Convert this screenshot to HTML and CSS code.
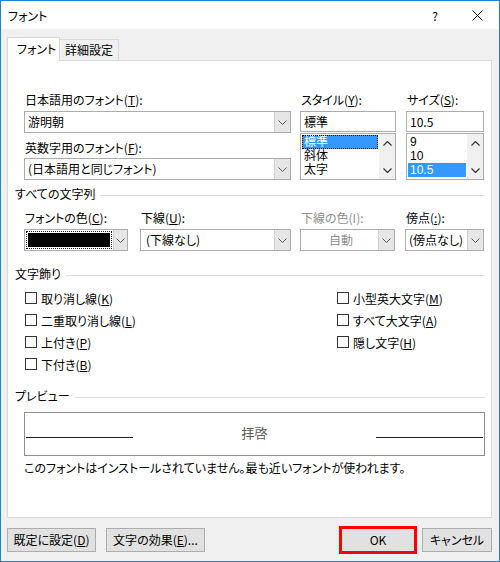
FILE: index.html
```html
<!DOCTYPE html>
<html lang="ja">
<head>
  <meta charset="UTF-8">
  <meta name="viewport" content="width=device-width, initial-scale=1.0">
  <title>フォント</title>
  <link rel="stylesheet" href="styles.css">
</head>
<body>
  <div class="window">
    <div class="titlebar">
      <span class="title">フォント</span>
      <span class="help">?</span>
      <svg class="close" width="11" height="11" viewBox="0 0 11 11"><path d="M0.5 0.5L10.5 10.5M10.5 0.5L0.5 10.5" stroke="#111" stroke-width="1"/></svg>
    </div>

    <div class="client">
      <div class="tabs">
        <div class="tab active">フォント</div>
        <div class="tab other">詳細設定</div>
      </div>

      <div class="panel">
        <div class="font-row">
          <div class="col-face">
            <div class="label">日本語用のフォント(<u>T</u>):</div>
            <div class="combo">
              <span class="combo-text">游明朝</span>
              <span class="combo-btn"><svg width="9" height="5" viewBox="0 0 9 5"><path d="M0.5 0.5L4.5 4.5L8.5 0.5" fill="none" stroke="#5a5a5a"/></svg></span>
            </div>
            <div class="label second">英数字用のフォント(<u>F</u>):</div>
            <div class="combo second">
              <span class="combo-text">(日本語用と同じフォント)</span>
              <span class="combo-btn"><svg width="9" height="5" viewBox="0 0 9 5"><path d="M0.5 0.5L4.5 4.5L8.5 0.5" fill="none" stroke="#5a5a5a"/></svg></span>
            </div>
          </div>

          <div class="col-style">
            <div class="label">スタイル(<u>Y</u>):</div>
            <div class="field">標準</div>
            <div class="listbox">
              <div class="items">
                <div class="item sel focus">標準</div>
                <div class="item">斜体</div>
                <div class="item">太字</div>
              </div>
              <div class="vscroll">
                <svg width="9" height="5" viewBox="0 0 9 5"><path d="M0.5 4.5L4.5 0.5L8.5 4.5" fill="none" stroke="#333" stroke-width="1.2"/></svg>
                <svg width="9" height="5" viewBox="0 0 9 5"><path d="M0.5 0.5L4.5 4.5L8.5 0.5" fill="none" stroke="#333" stroke-width="1.2"/></svg>
              </div>
            </div>
          </div>

          <div class="col-size">
            <div class="label">サイズ(<u>S</u>):</div>
            <div class="field">10.5</div>
            <div class="listbox">
              <div class="items">
                <div class="item">9</div>
                <div class="item">10</div>
                <div class="item sel">10.5</div>
              </div>
              <div class="vscroll">
                <svg width="9" height="5" viewBox="0 0 9 5"><path d="M0.5 4.5L4.5 0.5L8.5 4.5" fill="none" stroke="#333" stroke-width="1.2"/></svg>
                <svg width="9" height="5" viewBox="0 0 9 5"><path d="M0.5 0.5L4.5 4.5L8.5 0.5" fill="none" stroke="#333" stroke-width="1.2"/></svg>
              </div>
            </div>
          </div>
        </div>

        <div class="group">すべての文字列</div>

        <div class="attr-row">
          <div class="attr a-color">
            <div class="label">フォントの色(<u>C</u>):</div>
            <div class="combo">
              <span class="color-face"><span class="swatch"></span></span>
              <span class="combo-btn narrow"><svg width="9" height="5" viewBox="0 0 9 5"><path d="M0.5 0.5L4.5 4.5L8.5 0.5" fill="none" stroke="#5a5a5a"/></svg></span>
            </div>
          </div>
          <div class="attr a-under">
            <div class="label">下線(<u>U</u>):</div>
            <div class="combo">
              <span class="combo-text pad">(下線なし)</span>
              <span class="combo-btn"><svg width="9" height="5" viewBox="0 0 9 5"><path d="M0.5 0.5L4.5 4.5L8.5 0.5" fill="none" stroke="#5a5a5a"/></svg></span>
            </div>
          </div>
          <div class="attr a-ucolor">
            <div class="label disabled">下線の色(I):</div>
            <div class="combo">
              <span class="combo-text center disabled">自動</span>
              <span class="combo-btn"><svg width="9" height="5" viewBox="0 0 9 5"><path d="M0.5 0.5L4.5 4.5L8.5 0.5" fill="none" stroke="#5a5a5a"/></svg></span>
            </div>
          </div>
          <div class="attr a-dot">
            <div class="label">傍点(<u>:</u>):</div>
            <div class="combo">
              <span class="combo-text">(傍点なし)</span>
              <span class="combo-btn"><svg width="9" height="5" viewBox="0 0 9 5"><path d="M0.5 0.5L4.5 4.5L8.5 0.5" fill="none" stroke="#5a5a5a"/></svg></span>
            </div>
          </div>
        </div>

        <div class="group deco">文字飾り</div>

        <div class="checks">
          <div class="check-col">
            <div class="check"><span class="box"></span>取り消し線(<u>K</u>)</div>
            <div class="check"><span class="box"></span>二重取り消し線(<u>L</u>)</div>
            <div class="check"><span class="box"></span>上付き(<u>P</u>)</div>
            <div class="check"><span class="box"></span>下付き(<u>B</u>)</div>
          </div>
          <div class="check-col right">
            <div class="check"><span class="box"></span>小型英大文字(<u>M</u>)</div>
            <div class="check"><span class="box"></span>すべて大文字(<u>A</u>)</div>
            <div class="check"><span class="box"></span>隠し文字(<u>H</u>)</div>
          </div>
        </div>

        <div class="group prev">プレビュー</div>

        <div class="preview">
          <span class="pline"></span>
          <span class="ptext">拝啓</span>
          <span class="pline"></span>
        </div>
        <div class="note">このフォントはインストールされていません。最も近いフォントが使われます。</div>
      </div>

      <div class="footer">
        <button class="btn b-default">既定に設定(<u>D</u>)</button>
        <button class="btn b-effect">文字の効果(<u>E</u>)...</button>
        <span class="ok-wrap"><button class="btn b-ok">OK</button></span>
        <button class="btn b-cancel">キャンセル</button>
      </div>
    </div>
  </div>
</body>
</html>
```

FILE: styles.css
```css
body {
  margin: 0;
  font-family: "Noto Sans CJK JP", "Noto Sans", sans-serif;
  font-size: 12px;
  font-feature-settings: "palt";
  color: #000;
}

.window {
  width: 500px;
  height: 562px;
  box-sizing: border-box;
  border: 1px solid #1883d7;
  display: flex;
  flex-direction: column;
  background: #fff;
}

.titlebar {
  height: 28px;
  display: flex;
  align-items: center;
  padding-left: 7px;
}

.title {
  flex: 1;
}

.help {
  font-size: 12px;
  margin-right: 34px;
}

.close {
  margin-right: 16px;
}

.client {
  flex: 1;
  background: #f0f0f0;
  padding: 8px 7px 0 6px;
  display: flex;
  flex-direction: column;
}

/* tabs */
.tabs {
  display: flex;
  align-items: flex-end;
  height: 23px;
}

.tab {
  box-sizing: border-box;
  border: 1px solid #d9d9d9;
  border-bottom: none;
  white-space: nowrap;
}

.tab.active {
  width: 53px;
  height: 24px;
  margin-bottom: -1px;
  padding-left: 9px;
  line-height: 22px;
  background: #fff;
  position: relative;
  z-index: 1;
}

.tab.other {
  width: 59px;
  height: 21px;
  padding-left: 5px;
  line-height: 20px;
  border-left: none;
}

.panel {
  height: 458px;
  box-sizing: border-box;
  border: 1px solid #d9d9d9;
  background: #fff;
  padding: 32px 6px 0 7px;
}

/* font rows */
.font-row {
  display: flex;
  margin-left: 9px;
}

.col-face {
  width: 267px;
  margin-right: 9px;
}

.col-style {
  width: 96px;
  margin-right: 10px;
}

.col-size {
  width: 78px;
}

.label {
  height: 14px;
  line-height: 14px;
  padding-left: 1px;
  white-space: nowrap;
}

.label.second {
  margin-top: 8px;
}

.disabled {
  color: #8d8d8d;
}

.combo {
  height: 22px;
  margin-top: 4px;
  box-sizing: border-box;
  border: 1px solid #acacac;
  background: #fff;
  display: flex;
}

.combo.second {
  margin-top: 3px;
}

.combo-text {
  flex: 1;
  padding-left: 3px;
  line-height: 20px;
  white-space: nowrap;
}

.combo-text.pad {
  padding-left: 5px;
}

.combo-text.center {
  text-align: center;
}

.combo-btn {
  width: 15px;
  background: #e6e6e6;
  border-left: 1px solid #d0d0d0;
  display: flex;
  align-items: center;
  justify-content: center;
}

.combo-btn.narrow {
  width: 13px;
}

.field {
  height: 21px;
  margin-top: 4px;
  box-sizing: border-box;
  border: 1px solid #acacac;
  padding-left: 3px;
  line-height: 19px;
}

.listbox {
  height: 47px;
  margin-top: 1px;
  box-sizing: border-box;
  border: 1px solid #acacac;
  display: flex;
}

.items {
  flex: 1;
  padding: 1px 1px 0 1px;
}

.item {
  height: 14px;
  line-height: 14px;
  padding-left: 2px;
  font-family: "Liberation Sans", "Noto Sans CJK JP", sans-serif;
}

.item.sel {
  background: #3399ff;
  color: #fff;
}

.item.focus {
  outline: 1px dotted #000;
  outline-offset: -1px;
}

.vscroll {
  width: 16px;
  background: #f0f0f0;
  display: flex;
  flex-direction: column;
  justify-content: space-between;
  align-items: center;
  padding: 7px 0 6px;
  box-sizing: border-box;
}

/* group headers */
.group {
  display: flex;
  align-items: center;
  height: 14px;
  line-height: 14px;
  margin-top: 7px;
  white-space: nowrap;
}

.group::after {
  content: "";
  flex: 1;
  height: 1px;
  background: #dcdcdc;
  margin: 2px 0 0 5px;
}

.group.deco {
  margin-top: 16px;
}

.group.prev {
  margin-top: 14px;
}

/* attribute row */
.attr-row {
  display: flex;
  margin-left: 9px;
  margin-top: 10px;
}

.a-color {
  width: 104px;
  margin-right: 12px;
}

.a-under {
  width: 151px;
  margin-right: 9px;
}

.a-ucolor {
  width: 95px;
  margin-right: 10px;
}

.a-dot {
  width: 79px;
}

.color-face {
  flex: 1;
  margin: 1px;
  padding: 1px;
  border: 1px dotted #222;
  display: flex;
}

.swatch {
  flex: 1;
  background: #050505;
}

/* checkboxes */
.checks {
  display: flex;
  margin-left: 9px;
  margin-top: 6px;
}

.check-col {
  width: 312px;
}

.check-col.right {
  width: auto;
}

.check {
  height: 22px;
  display: flex;
  align-items: center;
  white-space: nowrap;
}

.box {
  width: 12px;
  height: 12px;
  box-sizing: border-box;
  border: 1px solid #333;
  background: #fff;
  margin: 0 4px 0 1px;
}

/* preview */
.preview {
  height: 44px;
  margin: 9px 0 0 9px;
  box-sizing: border-box;
  border: 1px solid #8e8e8e;
  display: flex;
  align-items: flex-end;
  padding: 0 1px;
}

.pline {
  width: 107px;
  border-bottom: 1px solid #222;
  margin-bottom: 17px;
}

.ptext {
  flex: 1;
  text-align: center;
  font-size: 13px;
  line-height: 16px;
  color: #5c5c5c;
  margin-bottom: 14px;
}

.note {
  margin: 5px 0 0 9px;
  line-height: 14px;
  white-space: nowrap;
}

/* footer */
.footer {
  display: flex;
  align-items: center;
  height: 24px;
  margin-top: 10px;
}

.btn {
  height: 24px;
  box-sizing: border-box;
  border: 1px solid #adadad;
  background: #e1e1e1;
  font: inherit;
  color: #000;
  padding: 0;
  line-height: 20px;
  white-space: nowrap;
}

.b-default {
  width: 89px;
}

.b-effect {
  width: 99px;
  margin-left: 10px;
}

.ok-wrap {
  margin-left: auto;
  width: 78px;
  height: 28px;
  box-sizing: border-box;
  border: 3px solid #ff0000;
  display: flex;
}

.b-ok {
  width: 72px;
  height: 22px;
  border: none;
}

.b-cancel {
  width: 70px;
  margin-left: 5px;
}
```
